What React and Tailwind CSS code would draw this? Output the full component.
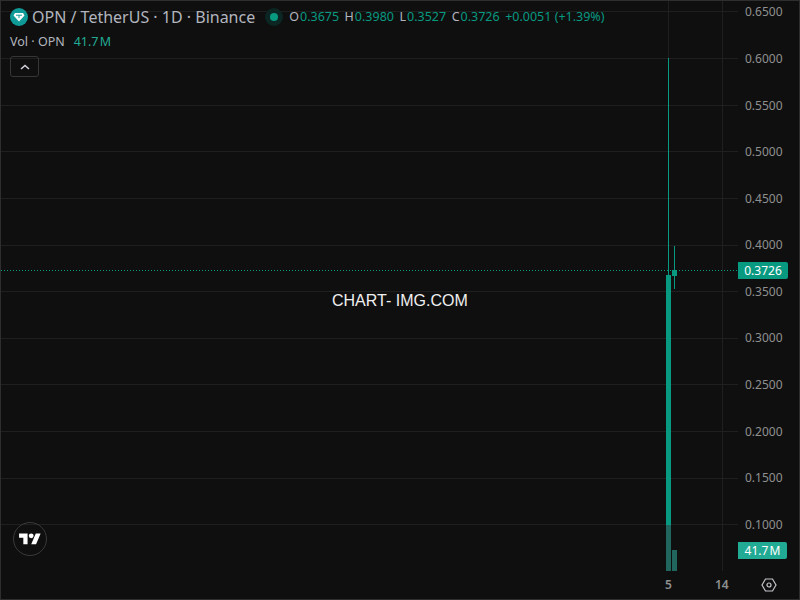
const GRID_Y = [10, 57, 104, 150, 197, 244, 290, 337, 383, 430, 477, 523];
const LABEL_TOP = [5, 52, 99, 145, 192, 238, 285, 331, 378, 425, 471, 518];
const PRICES = ["0.6500", "0.6000", "0.5500", "0.5000", "0.4500", "0.4000", "0.3500", "0.3000", "0.2500", "0.2000", "0.1500", "0.1000"];

const Ohlc = ({ label, value }) => (
  <span className="flex items-center gap-px">
    <span className="text-[#b2b5be]">{label}</span>
    <span className="text-[#089981]">{value}</span>
  </span>
);

const ChartCanvas = () => (
  <svg width="737" height="571" className="block" shapeRendering="crispEdges">
    {GRID_Y.map((y) => (
      <rect key={y} x="0" y={y} width="737" height="1" fill="#1f1f1f" />
    ))}
    <rect x="667" y="0" width="1" height="570" fill="#1f1f1f" />
    <rect x="721" y="0" width="1" height="570" fill="#1f1f1f" />
    <line x1="0" y1="269.500" x2="737" y2="269.500" stroke="#089981" strokeWidth="1" strokeDasharray="1 2" />
    <rect x="667" y="57" width="1" height="217" fill="#089981" />
    <rect x="665" y="274" width="5" height="250" fill="#089981" />
    <rect x="673" y="245" width="1" height="43" fill="#089981" />
    <rect x="671" y="269" width="5" height="6" fill="#089981" />
    <rect x="665" y="524" width="5" height="46" fill="#20665e" />
    <rect x="671" y="549" width="5" height="21" fill="#20665e" />
  </svg>
);

const App = () => {
  return (
    <div className="w-[800px] h-[600px] overflow-hidden bg-[#0f0f0f] border border-[#2e2e2e] font-['Noto_Sans','Open_Sans',sans-serif] flex flex-col">
      <div className="flex flex-1 relative">
        <ChartCanvas />

        <div className="flex-1 relative text-[12px] text-[#8f8f8f]">
          {PRICES.map((p, i) => (
            <span key={p} className="absolute left-[7px] leading-none" style={{ top: LABEL_TOP[i] }}>
              {p}
            </span>
          ))}
        </div>

        {/* legend */}
        <div className="absolute left-[9px] top-[5px] flex flex-col">
          <div className="flex items-center h-[22px]">
            <svg width="18" height="18" viewBox="0 0 18 18" className="mr-[4px]">
              <circle cx="9" cy="9" r="9" fill="#0f9a97" />
              <path d="M5 5h8l1.500 2.500L9 13.500 3.500 7.500z" fill="#fff" />
              <path d="M6 7.200h6M9 7.200v3" stroke="#0f9a97" strokeWidth="1" />
            </svg>
            <span className="text-[16px] text-[#b2b5be] leading-none whitespace-nowrap">OPN / TetherUS · 1D · Binance</span>
            <span className="ml-[8px] w-[18px] h-[18px] rounded-full bg-[#0b2623] flex items-center justify-center translate-x-[2px]">
              <span className="w-[8px] h-[8px] rounded-full bg-[#089981]" />
            </span>
            <div className="ml-[8px] flex gap-[5.5px] text-[12.5px] whitespace-nowrap">
              <Ohlc label="O" value="0.3675" />
              <Ohlc label="H" value="0.3980" />
              <Ohlc label="L" value="0.3527" />
              <Ohlc label="C" value="0.3726" />
              <span className="text-[#089981]">+0.0051 (+1.39%)</span>
            </div>
          </div>
          <div className="flex items-center gap-[9px] text-[12.5px] h-[20px] mt-[4px] whitespace-nowrap">
            <span className="text-[#b2b5be]">Vol · OPN</span>
            <span className="text-[#22ab94] [word-spacing:-2px]">41.7 M</span>
          </div>
          <button className="mt-[4px] w-[29px] h-[21px] rounded-[3px] border border-[#363636] flex items-center justify-center">
            <svg width="12" height="8" viewBox="0 0 12 8" fill="none">
              <path d="M2 6l4-3.500L10 6" stroke="#d1d4dc" strokeWidth="1.500" />
            </svg>
          </button>
        </div>

        {/* watermark */}
        <span className="absolute left-[331px] top-[290px] text-[16px] leading-[20px] text-[#f0f0f0] font-['Liberation_Sans',sans-serif] whitespace-nowrap">
          CHART- IMG.COM
        </span>

        {/* logo */}
        <div className="absolute left-[12px] top-[521px] w-[34px] h-[34px] rounded-full border border-[#3a3a3a] flex items-center justify-center">
          <svg width="22" height="17" viewBox="0 0 36 28" fill="#fff">
            <path d="M14 22H7V11H0V4h14v18zM28 22h-8l7.500-18h8L28 22z" />
            <circle cx="20" cy="8" r="4" />
          </svg>
        </div>

        {/* last price + volume tags */}
        <span className="absolute left-[737px] top-[261px] w-[50px] h-[17px] rounded-r-[2px] bg-[#089981] text-[12px] leading-[17px] text-white text-center">
          0.3726
        </span>
        <span className="absolute left-[737px] top-[541px] w-[49px] h-[17px] rounded-r-[2px] bg-[#22ab94] text-[12px] leading-[17px] text-white text-center [word-spacing:-2px]">
          41.7 M
        </span>
      </div>

      {/* time axis */}
      <div className="h-[27px] shrink-0 relative text-[12px] font-semibold text-[#8f8f8f]">
        <span className="absolute left-[664px] top-[5px] leading-[16px]">5</span>
        <span className="absolute left-[714px] top-[5px] leading-[16px]">14</span>
        <svg width="16" height="14" viewBox="0 0 16 14" fill="none" className="absolute left-[760px] top-[6px]">
          <path d="M4.500 1h7L15 7l-3.500 6h-7L1 7z" stroke="#c4c6cc" strokeWidth="1.200" />
          <circle cx="8" cy="7" r="2" stroke="#c4c6cc" strokeWidth="1.200" />
        </svg>
      </div>
    </div>
  );
};

export default App;
